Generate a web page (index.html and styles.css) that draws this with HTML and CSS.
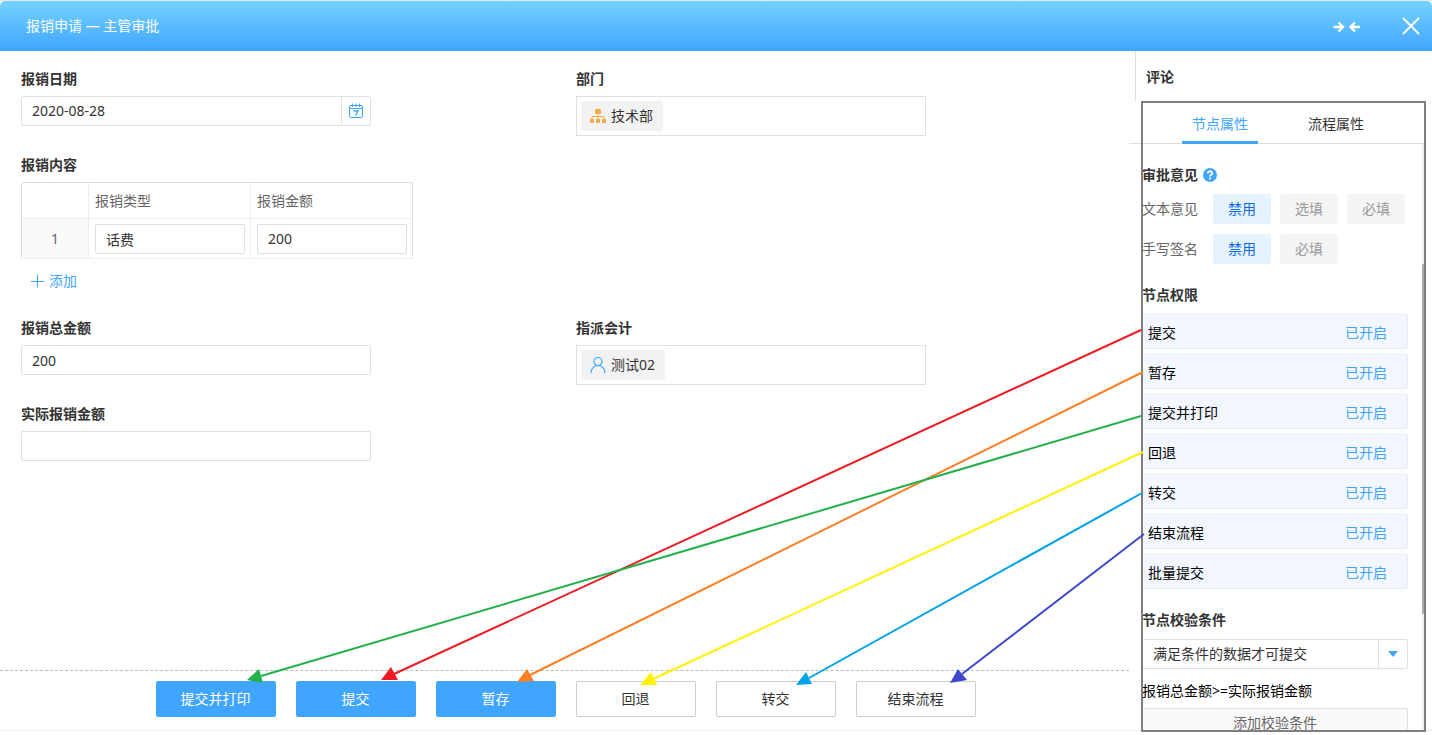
FILE: index.html
```html
<!DOCTYPE html>
<html lang="zh-CN">
<head>
    <meta charset="UTF-8">
    <meta name="viewport" content="width=device-width, initial-scale=1.0">
    <title>报销申请</title>
    <link rel="stylesheet" href="styles.css">
</head>
<body>
    <header class="topbar">
        <h1>报销申请 — 主管审批</h1>
        <div class="topbar-actions">
            <button type="button" class="icon-btn" aria-label="收起">
                <svg width="28" height="14" viewBox="0 0 28 14" fill="none" stroke="#fff" stroke-width="2.400">
                    <path d="M0.500 8H10M5.500 3.500L10 8L5.500 12.500M27 8H17.500M22 3.500L17.500 8L22 12.500"/>
                </svg>
            </button>
            <button type="button" class="icon-btn" aria-label="关闭">
                <svg width="18" height="18" viewBox="0 0 18 18" fill="none" stroke="#fff" stroke-width="2">
                    <path d="M1 1L17 17M17 1L1 17"/>
                </svg>
            </button>
        </div>
    </header>

    <div class="layout">
        <main class="main">
            <form class="form">
                <div class="field">
                    <label for="date">报销日期</label>
                    <div class="control date-control">
                        <input type="text" id="date" value="2020-08-28">
                        <button type="button" class="date-btn" aria-label="选择日期">
                            <svg width="16" height="16" viewBox="0 0 16 16" fill="none" stroke="#40a5ff">
                                <rect x="1.500" y="2.500" width="13" height="12" rx="1.500"/>
                                <path d="M1.500 5.500H14.500M4.500 0.500V4M8 0.500V4M11.500 0.500V4"/>
                                <path d="M6 8H10L7.500 12.500" stroke-width="1.400"/>
                            </svg>
                        </button>
                    </div>
                </div>

                <div class="field">
                    <span class="label">部门</span>
                    <div class="tag-box">
                        <span class="tag">
                            <svg width="18" height="16" viewBox="0 0 18 16" fill="#f0ad4e">
                                <rect x="6" y="1" width="6" height="5"/>
                                <rect x="1" y="11" width="4" height="4"/>
                                <rect x="7" y="11" width="4" height="4"/>
                                <rect x="13" y="11" width="4" height="4"/>
                                <path d="M3 11V8.500H15V11M9 6V11" fill="none" stroke="#f0ad4e"/>
                            </svg>
                            技术部
                        </span>
                    </div>
                </div>

                <div class="field field-wide">
                    <span class="label">报销内容</span>
                    <table class="subform">
                        <thead>
                            <tr>
                                <th class="num"></th>
                                <th>报销类型</th>
                                <th>报销金额</th>
                            </tr>
                        </thead>
                        <tbody>
                            <tr>
                                <td class="num">1</td>
                                <td><input type="text" class="control" value="话费" aria-label="报销类型"></td>
                                <td><input type="text" class="control" value="200" aria-label="报销金额"></td>
                            </tr>
                        </tbody>
                    </table>
                    <button type="button" class="add-btn">
                        <svg width="14" height="14" viewBox="0 0 14 14" stroke="#40a5ff">
                            <path d="M6.500 0.500V13.500M0 7.500H13"/>
                        </svg>
                        添加
                    </button>
                </div>

                <div class="field">
                    <label for="total">报销总金额</label>
                    <input type="text" id="total" class="control" value="200">
                </div>

                <div class="field">
                    <span class="label">指派会计</span>
                    <div class="tag-box">
                        <span class="tag">
                            <svg width="18" height="16" viewBox="0 0 18 16" fill="none" stroke="#40a5ff" stroke-width="1.200">
                                <circle cx="9" cy="4.500" r="4"/>
                                <path d="M2 16C2 11.500 5 8.500 9 8.500S16 11.500 16 16"/>
                            </svg>
                            测试02
                        </span>
                    </div>
                </div>

                <div class="field">
                    <label for="actual">实际报销金额</label>
                    <input type="text" id="actual" class="control">
                </div>
            </form>

            <footer class="actions">
                <button type="button" class="btn btn-primary">提交并打印</button>
                <button type="button" class="btn btn-primary">提交</button>
                <button type="button" class="btn btn-primary">暂存</button>
                <button type="button" class="btn">回退</button>
                <button type="button" class="btn">转交</button>
                <button type="button" class="btn">结束流程</button>
            </footer>
        </main>

        <aside class="side">
            <h2 class="side-title">评论</h2>
            <div class="panel">
                <nav class="tabs">
                    <button type="button" class="tab active">节点属性</button>
                    <button type="button" class="tab">流程属性</button>
                </nav>
                <div class="panel-body">
                    <section class="group">
                        <h3>
                            审批意见
                            <svg width="14" height="14" viewBox="0 0 14 14">
                                <circle cx="7" cy="7" r="7" fill="#40a5ff"/>
                                <path d="M4.800 5.400C4.800 2.600 9.200 2.600 9.200 5.200C9.200 6.800 7 6.800 7 8.600" fill="none" stroke="#fff" stroke-width="1.800"/>
                                <rect x="6.100" y="9.600" width="1.800" height="1.800" fill="#fff"/>
                            </svg>
                        </h3>
                        <div class="option-row">
                            <span class="option-name">文本意见</span>
                            <button type="button" class="option selected">禁用</button>
                            <button type="button" class="option">选填</button>
                            <button type="button" class="option">必填</button>
                        </div>
                        <div class="option-row">
                            <span class="option-name">手写签名</span>
                            <button type="button" class="option selected">禁用</button>
                            <button type="button" class="option">必填</button>
                        </div>
                    </section>

                    <section class="group">
                        <h3>节点权限</h3>
                        <ul class="perms">
                            <li>提交 <a href="#">已开启</a></li>
                            <li>暂存 <a href="#">已开启</a></li>
                            <li>提交并打印 <a href="#">已开启</a></li>
                            <li>回退 <a href="#">已开启</a></li>
                            <li>转交 <a href="#">已开启</a></li>
                            <li>结束流程 <a href="#">已开启</a></li>
                            <li>批量提交 <a href="#">已开启</a></li>
                        </ul>
                    </section>

                    <section class="group">
                        <h3><label for="rule">节点校验条件</label></h3>
                        <div class="select-wrap">
                            <select id="rule">
                                <option>满足条件的数据才可提交</option>
                            </select>
                            <span class="caret"></span>
                        </div>
                        <p class="rule-text">报销总金额&gt;=实际报销金额</p>
                        <button type="button" class="rule-btn">添加校验条件</button>
                    </section>
                </div>
                <div class="scrollbar"></div>
            </div>
        </aside>
    </div>

    <!-- arrows from each permission to its button -->
    <svg class="arrows" width="1432" height="735" viewBox="0 0 1432 735" stroke-width="2">
        <g stroke="#ed1c24" fill="#ed1c24">
            <path d="M1141 330L394 674"/>
            <path stroke="none" d="M381 680L391 667L398 680Z"/>
        </g>
        <g stroke="#ff7f27" fill="#ff7f27">
            <path d="M1143 372L530 675"/>
            <path stroke="none" d="M517 682L527 669L534 681Z"/>
        </g>
        <g stroke="#22b14c" fill="#22b14c">
            <path d="M1141 416L261 676"/>
            <path stroke="none" d="M247 680L259 669L263 683Z"/>
        </g>
        <g stroke="#fff200" fill="#fff200">
            <path d="M1143 452L653 679"/>
            <path stroke="none" d="M640 685L651 672L657 685Z"/>
        </g>
        <g stroke="#00a2e8" fill="#00a2e8">
            <path d="M1142 493L809 678"/>
            <path stroke="none" d="M796 685L806 672L812 684Z"/>
        </g>
        <g stroke="#3f48cc" fill="#3f48cc">
            <path d="M1144 534L962 674"/>
            <path stroke="none" d="M950 683L958 669L967 680Z"/>
        </g>
    </svg>
</body>
</html>
```
FILE: styles.css
```css
* {
    box-sizing: border-box;
}
body {
    font-family: "Noto Sans", "Noto Sans CJK SC", sans-serif;
    font-size: 14px;
    line-height: 20px;
    color: #333;
    background-color: #fff;
    margin: 0;
    height: 100vh;
    padding-bottom: 4px;
    border-top: 1px solid #e8e8e8;
    display: flex;
    flex-direction: column;
    position: relative;
    overflow: hidden;
}
h1, h2, h3, p, ul {
    margin: 0;
    padding: 0;
    font-size: 14px;
}
button, input, select {
    font: inherit;
    color: inherit;
    margin: 0;
    padding: 0;
    border: none;
    background: none;
}
button {
    cursor: pointer;
}
svg {
    display: block;
}
.topbar {
    height: 50px;
    flex: none;
    padding: 0 12px 0 26px;
    display: flex;
    justify-content: space-between;
    align-items: center;
    color: #fff;
    background: linear-gradient(#74d3ff, #40a5ff);
    border-radius: 5px 5px 0 0;
}
.topbar h1 {
    font-weight: normal;
}
.topbar-actions {
    display: flex;
    align-items: center;
    gap: 41px;
}
.layout {
    flex: 1;
    min-height: 0;
    display: flex;
    border-bottom: 1px solid #eee;
}
.main {
    flex: 1;
    display: flex;
    flex-direction: column;
}

/* form */
.form {
    flex: 1;
    padding: 18px 0 0 21px;
    display: grid;
    grid-template-columns: 1fr 1fr;
    align-content: start;
    gap: 19px 2px;
}
.field label,
.field .label {
    display: block;
    font-weight: bold;
    margin-bottom: 7px;
}
.field-wide {
    grid-column: 1 / 3;
}
.control {
    width: 100%;
    max-width: 350px;
    height: 30px;
    padding: 0 10px;
    border: 1px solid #e0e0e0;
    border-radius: 2px;
    background-color: #fff;
}
.date-control {
    display: flex;
    padding-right: 0;
}
.date-control input {
    flex: 1;
}
.date-btn {
    width: 29px;
    border-left: 1px solid #e0e0e0;
    display: flex;
    align-items: center;
    justify-content: center;
}
.tag-box {
    max-width: 350px;
    height: 40px;
    padding: 4px;
    border: 1px solid #e0e0e0;
    display: flex;
}
.tag {
    display: flex;
    align-items: center;
    gap: 4px;
    padding: 0 10px 0 8px;
    background-color: #f2f2f2;
}
.subform {
    width: 392px;
    table-layout: fixed;
    border-collapse: separate;
    border-spacing: 0;
    border: 1px solid #dcdce6;
    border-bottom-color: #eee;
    border-radius: 3px 3px 0 0;
}
.subform th,
.subform td {
    height: 39px;
    padding: 0 5px 0 6px;
    text-align: left;
    font-weight: normal;
    color: #666;
    border-left: 1px solid #eee;
}
.subform th {
    height: 36px;
    border-bottom: 1px solid #eee;
}
.subform .num {
    width: 66px;
    padding: 0;
    text-align: center;
    border-left: none;
}
.subform td.num {
    background-color: #fafafa;
}
.subform .control {
    display: block;
    color: #333;
}
.add-btn {
    height: 40px;
    padding: 4px 10px 0;
    display: flex;
    align-items: center;
    gap: 4px;
    color: #40a5ff;
}

/* bottom buttons */
.actions {
    display: flex;
    justify-content: center;
    gap: 20px;
    padding: 10px 0 13px 2px;
    border-top: 1px dashed #bbb;
}
.btn {
    width: 120px;
    height: 36px;
    border: 1px solid #ccc;
    border-radius: 2px;
    background-color: #fff;
}
.btn-primary {
    color: #fff;
    border-color: #40a5ff;
    background-color: #40a5ff;
}

/* right side */
.side {
    width: 303px;
    flex: none;
    display: flex;
    flex-direction: column;
}
.side-title {
    height: 50px;
    flex: none;
    margin-left: 6px;
    padding-left: 10px;
    line-height: 52px;
    border-left: 1px solid #ddd;
}
.panel {
    position: relative;
    flex: 1;
    min-height: 0;
    display: flex;
    flex-direction: column;
}
.panel::after {
    content: "";
    position: absolute;
    top: 0;
    right: 6px;
    bottom: -2px;
    left: 12px;
    border: 2px solid #7f7f7f;
    pointer-events: none;
}
.tabs {
    flex: none;
    display: flex;
    gap: 40px;
    margin-right: 8px;
    padding-left: 53px;
    border-bottom: 1px solid #ddd;
}
.tab {
    width: 76px;
    padding-top: 5px;
    margin-bottom: -1px;
    line-height: 35px;
    border-bottom: 3px solid transparent;
}
.tab.active {
    color: #40a5ff;
    border-bottom-color: #40a5ff;
}
.panel-body {
    flex: 1;
    min-height: 0;
    overflow: hidden;
    padding: 21px 24px 0 13px;
    display: flex;
    flex-direction: column;
    gap: 21px;
}
.group {
    flex: none;
}
.group h3 {
    display: flex;
    align-items: center;
    gap: 5px;
    margin-bottom: 9px;
}
.option-row {
    display: flex;
    align-items: center;
    gap: 9px;
}
.option-row + .option-row {
    margin-top: 10px;
}
.option-name {
    width: 62px;
    color: #666;
}
.option {
    width: 58px;
    height: 30px;
    border-radius: 2px;
    color: #999;
    background-color: #f5f5f5;
}
.option.selected {
    color: #0b6bdc;
    background-color: #e5f3ff;
}
.perms {
    list-style: none;
    display: flex;
    flex-direction: column;
    gap: 5px;
}
.perms li {
    height: 35px;
    padding: 3px 20px 0 5px;
    display: flex;
    justify-content: space-between;
    align-items: center;
    color: #000;
    background-color: #f2f6fe;
    border: 1px solid #e6ebf5;
    border-radius: 2px;
}
.perms a {
    color: #40a5ff;
    text-decoration: none;
}
.select-wrap {
    display: flex;
    height: 30px;
    border: 1px solid #e0e0e0;
    border-radius: 2px;
}
.select-wrap select {
    flex: 1;
    appearance: none;
    padding: 0 10px;
}
.caret {
    width: 29px;
    border-left: 1px solid #e0e0e0;
    display: flex;
    align-items: center;
    justify-content: center;
    pointer-events: none;
}
.caret::before {
    content: "";
    border: 5px solid transparent;
    border-top: 6px solid #40a5ff;
    border-bottom: none;
}
.rule-text {
    margin: 12px 0 7px;
    color: #000;
}
.rule-btn {
    width: 100%;
    height: 30px;
    color: #666;
    background-color: #fafafa;
    border: 1px solid #e0e0e0;
    border-radius: 2px;
}
.scrollbar {
    position: absolute;
    top: 43px;
    right: 8px;
    bottom: 0;
    width: 2px;
    padding-top: 120px;
    background-color: #f0f0f0;
}
.scrollbar::before {
    content: "";
    display: block;
    height: 350px;
    border-radius: 2px;
    background-color: #aaa;
}
.arrows {
    position: absolute;
    top: -1px;
    left: 0;
    pointer-events: none;
}
```
